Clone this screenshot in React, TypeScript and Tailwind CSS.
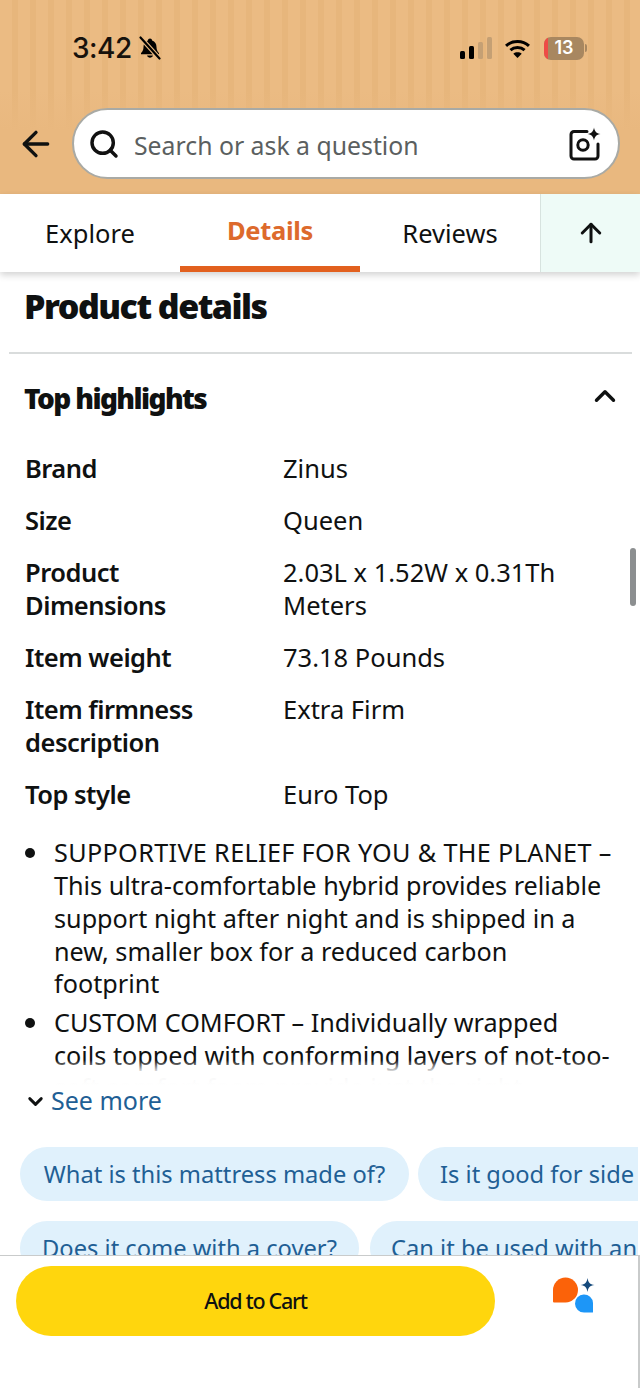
import { ArrowLeft, ArrowUp, ChevronDown, ChevronUp, Search } from "lucide-react";

const specs = [
    { label: ["Brand"], value: ["Zinus"] },
    { label: ["Size"], value: ["Queen"] },
    { label: ["Product", "Dimensions"], value: ["2.03L x 1.52W x 0.31Th", "Meters"] },
    { label: ["Item weight"], value: ["73.18 Pounds"] },
    { label: ["Item firmness", "description"], value: ["Extra Firm"] },
    { label: ["Top style"], value: ["Euro Top"] },
];

function BellSlash() {
    return (
        <svg viewBox="0 0 24 24" className="h-[24px] w-[24px]">
            <path d="M12 2.500c-1.200 0-2 .8-2.100 1.900C7 5.300 5.500 7.800 5.500 11c0 3-1 4.600-2.500 6v1.200h18V17c-1.500-1.400-2.500-3-2.500-6 0-3.200-1.500-5.700-4.400-6.600C14 3.300 13.200 2.500 12 2.500z" fill="#000" />
            <path d="M9 19.500c.4 1.400 1.600 2.200 3 2.200s2.600-.8 3-2.200z" fill="#000" />
            <path d="M2.500 1.500l19 21" stroke="#e9b87f" strokeWidth="4.500" />
            <path d="M2.500 1.500l19 21" stroke="#000" strokeWidth="2.200" strokeLinecap="round" />
        </svg>
    );
}

function StatusBar() {
    return (
        <div className="flex h-[48px] items-center justify-between pl-[72px] pr-[53px] text-black">
            <div className="flex items-center gap-[6px]">
                <span className="font-['Inter',sans-serif] text-[28px] font-medium leading-none tracking-[-0.5px] text-[#17120c]">3:42</span>
                <BellSlash />
            </div>
            <div className="flex items-center">
                <div className="flex items-end gap-[3.500px]">
                    <div className="h-[8px] w-[5.500px] rounded-[1.500px] bg-black" />
                    <div className="h-[13px] w-[5.500px] rounded-[1.500px] bg-black" />
                    <div className="h-[17px] w-[5.500px] rounded-[1.500px] bg-[#c5a074]" />
                    <div className="h-[22px] w-[5.500px] rounded-[1.500px] bg-[#c5a074]" />
                </div>
                <svg viewBox="0 0 28 22" className="ml-[12px] h-[21px] w-[27px]" fill="none" stroke="#000" strokeWidth="3.200">
                    <path d="M2 8.200c6.600-6 17.400-6 24 0" />
                    <path d="M6.600 12.600c4-3.600 10.800-3.600 14.800 0" />
                    <path d="M14 21l-4.400-4.600c2.400-2 6.400-2 8.800 0z" fill="#000" stroke="none" />
                </svg>
                <div className="ml-[13px] flex items-center">
                    <div className="relative flex h-[23px] w-[40px] items-center justify-center overflow-hidden rounded-[7px] bg-[#a88760]">
                        <div className="absolute inset-y-0 left-0 w-[4px] bg-[#ee4b46]" />
                        <span className="font-['Inter',sans-serif] text-[18px] font-semibold leading-none text-white">13</span>
                    </div>
                    <div className="ml-[1px] h-[8px] w-[2px] rounded-r-full bg-[#a88760]" />
                </div>
            </div>
        </div>
    );
}

function LensIcon() {
    return (
        <svg viewBox="0 0 34 34" className="h-[34px] w-[34px]" fill="none" stroke="#111" strokeWidth="3">
            <path d="M20 4.500H7a3 3 0 0 0-3 3V29a3 3 0 0 0 3 3h21a3 3 0 0 0 3-3V17" strokeLinecap="round" />
            <circle cx="16" cy="18" r="5.200" />
            <path d="M27 0.500c.7 4 2.300 5.700 6.500 6.500-4.200.8-5.800 2.500-6.500 6.500-.7-4-2.300-5.700-6.500-6.500 4.200-.8 5.800-2.500 6.500-6.500z" fill="#111" stroke="none" />
        </svg>
    );
}

function AssistantLogo() {
    return (
        <svg viewBox="0 0 42 38" className="h-[38px] w-[42px]">
            <path d="M0 24.500V13a12.500 12.500 0 1 1 12.500 12.500H1a1 1 0 0 1-1-1z" fill="#fb6209" />
            <path d="M40 35v-9a9 9 0 1 0-9 9.500h8.500a.5.500 0 0 0 .5-.5z" fill="#1d96f7" />
            <path d="M34.500 1c.8 4.700 2.300 6.200 7 7-4.700.8-6.200 2.300-7 7-.8-4.700-2.300-6.200-7-7 4.700-.8 6.200-2.300 7-7z" fill="#154a7c" />
        </svg>
    );
}

export default function App() {
    return (
        <div className="relative flex h-[1388px] w-[640px] flex-col overflow-hidden bg-white font-['Noto_Sans',sans-serif] text-[#0f1111]">
            {/* Header */}
            <header className="flex h-[194px] shrink-0 flex-col bg-[linear-gradient(180deg,rgba(233,184,127,0)_0px,rgba(233,184,127,0)_90px,#e9b87f_130px),repeating-linear-gradient(90deg,#ebbb83_0px,#ebbb83_12px,#e7b67c_12px,#e7b67c_18px)] pt-[24px]">
                <StatusBar />
                <div className="mt-[36px] flex items-center pl-[16px] pr-[20px]">
                    <ArrowLeft className="h-[40px] w-[40px] shrink-0" strokeWidth={2} />
                    <div className="ml-[16px] flex h-[71px] flex-1 items-center rounded-full border-2 border-[#a9aaa5] bg-white pl-[14px] pr-[17px]">
                        <Search className="h-[32px] w-[32px] shrink-0 text-[#111]" strokeWidth={2.6} />
                        <span className="ml-[14px] flex-1 pt-[5px] text-[24.800px] text-[#5b5f60]">Search or ask a question</span>
                        <LensIcon />
                    </div>
                </div>
            </header>

            {/* Tabs */}
            <nav className="z-10 flex h-[78px] shrink-0 bg-white shadow-[0_3px_7px_rgba(0,0,0,0.18)]">
                <div className="flex w-[180px] items-center justify-center text-[25.500px]">Explore</div>
                <div className="relative flex w-[180px] items-center justify-center pb-[6px] text-[25.500px] font-bold tracking-[-0.3px] text-[#dd6a2c]">
                    Details
                    <div className="absolute inset-x-0 bottom-0 h-[6px] bg-[#e2601e]" />
                </div>
                <div className="flex w-[180px] items-center justify-center text-[25.500px]">Reviews</div>
                <div className="flex w-[100px] items-center justify-center border-l border-[#d7e3df] bg-[#eefbf7]">
                    <ArrowUp className="h-[30px] w-[30px]" strokeWidth={2.4} />
                </div>
            </nav>

            {/* Details */}
            <main className="relative flex-1 overflow-hidden">
                <div className="h-[813px] overflow-hidden px-[25px] pt-[11px]">
                    <h1 className="-ml-[1px] text-[34px] font-black leading-[46px] tracking-[-1.500px]">Product details</h1>
                    <div className="-mx-[16px] mt-[23px] h-[2px] w-[623px] bg-[#d9dcdc]" />
                    <div className="mt-[21px] flex h-[46px] items-center justify-between">
                        <h2 className="-ml-[1px] text-[28px] font-black tracking-[-1.600px]">Top highlights</h2>
                        <ChevronUp className="-mr-[7px] -mt-[4px] h-[34px] w-[34px]" strokeWidth={2.4} />
                    </div>
                    <div className="mt-[31px] grid grid-cols-[258px_1fr] gap-y-[19.700px] text-[25.500px] leading-[32.500px]">
                        {specs.map((row) => (
                            <div key={row.label[0]} className="col-span-2 grid grid-cols-subgrid">
                                <div className="font-semibold tracking-[-0.5px]">
                                    {row.label.map((line) => <div key={line}>{line}</div>)}
                                </div>
                                <div>
                                    {row.value.map((line) => <div key={line}>{line}</div>)}
                                </div>
                            </div>
                        ))}
                    </div>
                    <ul className="mt-[26px] flex flex-col gap-[6px] pl-[29px] text-[25.200px] leading-[32.700px]">
                        <li className="relative whitespace-nowrap">
                            <div className="absolute -left-[29px] top-[12px] h-[10px] w-[10px] rounded-full bg-[#0f1111]" />
                            <div className="tracking-[0.35px]">SUPPORTIVE RELIEF FOR YOU &amp; THE PLANET –</div>
                            <div>This ultra-comfortable hybrid provides reliable</div>
                            <div>support night after night and is shipped in a</div>
                            <div>new, smaller box for a reduced carbon</div>
                            <div>footprint</div>
                        </li>
                        <li className="relative whitespace-nowrap">
                            <div className="absolute -left-[29px] top-[12px] h-[10px] w-[10px] rounded-full bg-[#0f1111]" />
                            <div>CUSTOM COMFORT – Individually wrapped</div>
                            <div>coils topped with conforming layers of not-too-</div>
                            <div>soft comfort foam provide just the right</div>
                        </li>
                    </ul>
                </div>
                {/* fade over the clipped text */}
                <div className="absolute inset-x-0 top-[788px] h-[25px] bg-gradient-to-b from-white/0 via-white/95 to-white" />
                <div className="absolute right-[4px] top-[276px] h-[58px] w-[6px] rounded-full bg-[#8c8f90]" />

                <button className="ml-[24px] flex h-[32px] items-center gap-[4px] text-[25px] text-[#1f5f95]">
                    <ChevronDown className="h-[23px] w-[23px] text-[#0f1111]" strokeWidth={3} />
                    See more
                </button>

                <div className="mt-[30px] ml-[20px] flex w-[618px] flex-col gap-[20px] overflow-hidden text-[23.700px] text-[#1f5f95]">
                    <div className="flex gap-[9px] whitespace-nowrap">
                        <div className="flex h-[54px] w-[389px] shrink-0 items-center justify-center rounded-full bg-[#e0f1fc] pt-[2px]">What is this mattress made of?</div>
                        <div className="flex h-[54px] w-[360px] shrink-0 items-center rounded-full bg-[#e0f1fc] pl-[22px] pt-[2px]">Is it good for side sleepers?</div>
                    </div>
                    <div className="flex gap-[11px] whitespace-nowrap">
                        <div className="flex h-[54px] w-[339px] shrink-0 items-center justify-center rounded-full bg-[#e0f1fc] pt-[2px]">Does it come with a cover?</div>
                        <div className="flex h-[54px] w-[460px] shrink-0 items-center rounded-full bg-[#e0f1fc] pl-[21px] pt-[2px]">Can it be used with an adjustable base?</div>
                    </div>
                </div>
            </main>

            {/* Bottom bar */}
            <footer className="z-10 flex h-[133px] shrink-0 border-t border-r-2 border-[#c9cbcb] bg-white pl-[16px] pt-[10px]">
                <button className="flex h-[70px] w-[479px] items-center justify-center rounded-full bg-[#ffd60d] text-[21.500px] font-medium tracking-[-1.300px] text-[#0f1111]">
                    Add to Cart
                </button>
                <div className="ml-[58px] mt-[11px]">
                    <AssistantLogo />
                </div>
            </footer>
            <div className="absolute bottom-0 right-0 h-[2px] w-[129px] bg-[#bfc1c1]" />
        </div>
    );
}
